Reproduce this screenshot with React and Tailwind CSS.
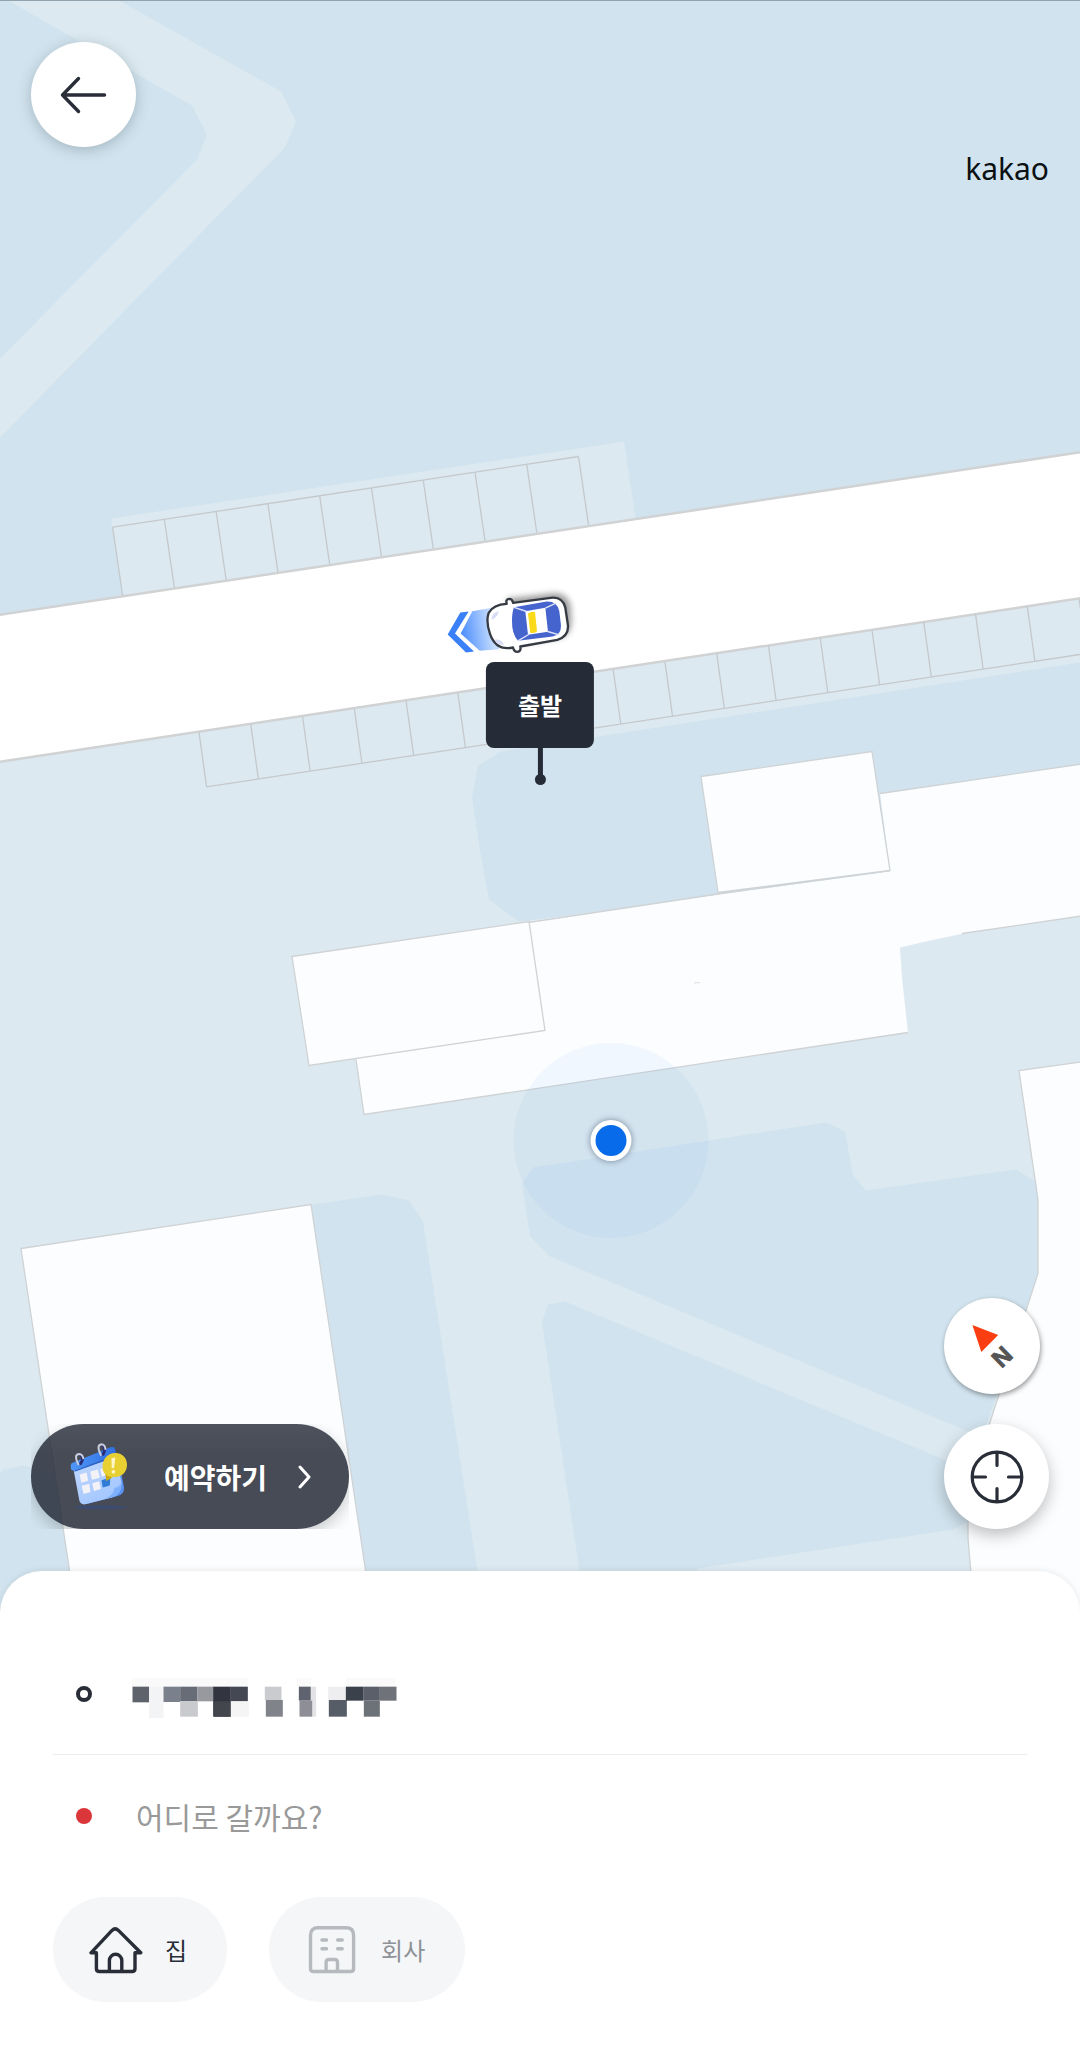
import React from "react";

const UPPER_BAYS = Array.from({ length: 10 }, (_, i) => i);
const LOWER_BAYS = Array.from({ length: 18 }, (_, i) => i);
const BAY_DX = 51.77;
const BAY_DY = -7.85;

function Car() {
  return (
    <g transform="translate(430 570) scale(0.33333)">
      <defs>
        <linearGradient id="beam" x1="80" y1="190" x2="185" y2="175" gradientUnits="userSpaceOnUse">
          <stop offset="0" stopColor="#3a82fb" />
          <stop offset="1" stopColor="#c3dbff" />
        </linearGradient>
        <filter id="carShadow" x="-20%" y="-30%" width="140%" height="160%">
          <feGaussianBlur stdDeviation="9" />
        </filter>
      </defs>
      <path d="M91 126 L116 123 L75 189 L132 243 L108 246 L53 192 Z" fill="#3a80f8" />
      <path d="M127 122 L185 112 L208 236 L149 241 L92 189 Z" fill="url(#beam)" />
      <path d="M230 85 L375 68 Q416 70 422 110 L424 150 Q424 190 395 200 L280 218 Z" fill="#000" opacity="0.4" filter="url(#carShadow)" />
      <path
        d="M230 100 Q226 86 238 85 Q247 85 249 97 L362 82 Q398 78 406 112 L414 165 Q416 197 382 208 L271 228 Q274 243 262 244 Q252 244 249 231 Q198 242 180 190 Q167 152 176 127 Q190 102 230 100 Z"
        fill="#fff"
        stroke="#363a42"
        strokeWidth="7"
        strokeLinejoin="round"
      />
      <path d="M184 148 Q186 125 206 122 Q204 140 184 148 Z M194 208 Q212 204 222 222 Q204 226 194 208 Z" fill="#d9dcf5" />
      <path d="M252 110 L350 93 Q382 92 388 122 L393 165 Q394 192 368 198 L264 211 Q245 190 246 150 Q246 125 252 110 Z" fill="#4664ce" />
      <path d="M286 122 L346 112 L354 184 L294 193 Z" fill="#fff" />
      <path d="M250 110 L290 123 M264 211 L296 192 M346 113 L378 98 M353 183 L388 193" stroke="#dfe4fb" strokeWidth="4" />
      <path d="M294 128 Q304 122 315 124 L321 182 Q312 190 301 187 Z" fill="#fbd91b" />
    </g>
  );
}

function MapCanvas() {
  return (
    <svg
      aria-hidden="true"
      className="absolute inset-0 h-full w-full"
      viewBox="0 0 1080 1613"
      preserveAspectRatio="xMidYMid slice"
    >
      <rect width="1080" height="1613" fill="#d1e3ee" />

      {/* footpath */}
      <path d="M8 0 L119 0 L281 91 L296 121 L285 147 L0 437 L0 358 L197 159 L207 134 L192 105 Z" fill="#dce9f0" />

      {/* ground south of the road */}
      <path d="M0 761 L1080 598 L1080 1613 L0 1613 Z" fill="#dce9f0" />
      <path d="M111 518 L624 441 L636 520 L123 597 Z" fill="#dce9f0" />

      {/* green areas */}
      <g fill="#d1e3ee">
        <path d="M501 751 L1080 662 L1080 800 L890 880 L519 921 L489 899 L480 850 L472 797 L478 765 Z" />
        <path d="M533 1167 L826 1122 L845 1131 L853 1175 L866 1190 L1016 1169 L1040 1184 L1040 1273 L982 1436 L966 1430 L550 1256 L530 1236 L522 1183 Z" />
        <path d="M542 1322 L548 1304 L565 1301 L944 1459 L976 1474 L970 1520 L953 1529 L697 1568 L690 1613 L586 1613 Z" />
        <path d="M300 1206 L381 1194 L409 1200 L423 1221 L484 1613 L360 1613 Z" />
        <path d="M0 1472 L4 1469 L24 1465 L60 1475 L80 1613 L0 1613 Z" />
      </g>

      {/* road */}
      <path d="M-5 615 L1085 451 L1085 597 L-5 762 Z" fill="#fff" stroke="#d0d2d3" strokeWidth="2.5" />

      {/* parking bays */}
      <g stroke="#c4c9cc" strokeWidth="1.3" fill="none">
        <path d="M112.6 526.7 L578.6 456" />
        {UPPER_BAYS.map((i) => (
          <line key={i} x1={112.6 + i * BAY_DX} y1={526.7 + i * BAY_DY} x2={122.6 + i * BAY_DX} y2={595 + i * BAY_DY} />
        ))}
        <path d="M206.6 786.3 L1080 654" />
        {LOWER_BAYS.map((i) => (
          <line key={i} x1={199 + i * BAY_DX} y1={731.7 + i * BAY_DY} x2={206.6 + i * BAY_DX} y2={786.3 + i * BAY_DY} />
        ))}
      </g>

      {/* buildings */}
      <path d="M356 1059 L364 1114 L908 1032 L902 977 L900 947 L926 941 L968 932 L1085 915 L1085 763 L880 793 L890 871 L718 894 L528 921 Z" fill="#fbfdff" />
      <g stroke="#cfd3d5" strokeWidth="1.3" fill="none">
        <path d="M962 933 L1085 915 M908 1032 L364 1114 L356 1059 M528 922 L718 893.5 L890 870 M1085 763 L880 793" />
        <path d="M701 776 L872 751 L890 870 L718 892 Z" fill="#fbfdff" />
        <path d="M292 956 L529 921 L545 1030 L309 1065 Z" fill="#fbfdff" />
        <path d="M1085 1061 L1019 1070 L1038 1199 L1038 1273 L989 1425 L968 1490 L968 1538 L975 1620 L1085 1620 Z" fill="#fbfdff" />
        <path d="M21 1248 L311 1204 L373 1620 L77 1620 Z" fill="#fbfdff" />
      </g>
      <path d="M694 982.5 L700 982" stroke="#dde1e3" strokeWidth="1" />

      {/* current position */}
      <defs>
        <filter id="dotShadow" x="-50%" y="-50%" width="200%" height="200%">
          <feGaussianBlur stdDeviation="3" />
        </filter>
      </defs>
      <circle cx="611" cy="1140" r="97.5" fill="#5a92f6" opacity="0.06" />
      <circle cx="611" cy="1140" r="21" fill="#4a5a70" opacity="0.6" filter="url(#dotShadow)" />
      <circle cx="611" cy="1140" r="20.5" fill="#fff" />
      <circle cx="611" cy="1140" r="15.5" fill="#086bea" />

      <Car />
    </svg>
  );
}

function CalendarIcon() {
  return (
    <svg aria-hidden="true" className="h-[67px] w-[58px] shrink-0" viewBox="150 105 175 200">
      <defs>
        <linearGradient id="calPage" x1="0" y1="0" x2="0.6" y2="1">
          <stop offset="0" stopColor="#c2d8ff" />
          <stop offset="1" stopColor="#a3c7ff" />
        </linearGradient>
        <linearGradient id="calTop" x1="0" y1="0" x2="1" y2="0">
          <stop offset="0" stopColor="#4e97f8" />
          <stop offset="1" stopColor="#2f6fe0" />
        </linearGradient>
      </defs>
      <ellipse cx="243" cy="298" rx="80" ry="6" fill="#2c4da0" opacity="0.35" />
      <path d="M300 170 L313 238 Q314 258 294 264 L200 288 L190 200 Z" fill="#5a92f2" />
      <path d="M161 186 L286 148 L305 220 Q308 258 276 268 L196 289 Q181 291 178 276 Z" fill="url(#calPage)" />
      <path d="M276 268 Q308 258 305 222 Q302 236 284 240 Q284 262 252 274 Z" fill="#7fb0fb" />
      <path d="M152 172 Q152 165 160 163 L272 117 Q284 113 286 122 L290 141 L163 187 Q155 188 153 182 Z" fill="url(#calTop)" />
      <path d="M163 187 L290 141 L291 145 L164 191 Z" fill="#2a64cf" />
      <path
        d="M179 199 L200 193 L205 218 L184 224 Z M211 190 L234 184 L240 209 L216 215 Z M241 182 L254 179 L256 203 L246 206 Z M185 233 L208 227 L212 252 L191 258 Z M217 225 L238 219 L243 243 L222 249 Z"
        fill="#f3f2f6"
      />
      <path d="M245 216 L272 208 L270 232 L249 238 Z" fill="#2f7bd6" />
      <g fill="none" strokeLinecap="round">
        <path d="M182 166 Q194 148 182 140" stroke="#2a2f78" strokeWidth="9" />
        <path d="M175 168 Q160 138 178 137 Q188 138 190 150" stroke="#c9ccdc" strokeWidth="6" />
        <path d="M250 138 Q260 120 248 110" stroke="#2a2f78" strokeWidth="9" />
        <path d="M243 140 Q228 110 245 108 Q255 109 257 122" stroke="#c9ccdc" strokeWidth="6" />
      </g>
      <path d="M287 134 C310 134 323 152 322 171 C321 196 302 208 281 206 L260 218 L257 198 C246 190 245 168 255 151 Q266 134 287 134 Z" fill="#e8d033" />
      <path d="M257 198 L260 218 L278 207 Q264 205 257 198 Z" fill="#c9a70e" />
      <path d="M275 150 L287 148 L283 179 L276 180 Z" fill="#fff6c8" />
      <circle cx="281" cy="191" r="5.5" fill="#fff6c8" />
    </svg>
  );
}

function MaskedAddress() {
  return (
    <svg role="img" aria-label="출발지 주소" className="h-12 w-[265px]" viewBox="306 91 794 144">
      <g fill="#fafafa">
        <rect x="306" y="115" width="348" height="26" />
        <rect x="800" y="115" width="42" height="26" />
        <rect x="948" y="115" width="148" height="26" />
      </g>
      <rect x="307" y="141" width="50" height="47" fill="#5d626b" />
      <rect x="357" y="141" width="43" height="94" fill="#f3f4f6" />
      <rect x="400" y="141" width="50" height="46" fill="#7a808c" />
      <rect x="450" y="141" width="52" height="44" fill="#686c76" />
      <rect x="450" y="185" width="53" height="46" fill="#c9cacd" />
      <rect x="502" y="141" width="48" height="44" fill="#97999e" />
      <rect x="549" y="141" width="53" height="90" fill="#32353f" />
      <rect x="552" y="185" width="50" height="46" fill="#43464d" />
      <rect x="602" y="141" width="51" height="44" fill="#434852" />
      <rect x="602" y="185" width="54" height="46" fill="#f5f5f6" />
      <rect x="704" y="141" width="50" height="40" fill="#c9cbce" />
      <rect x="707" y="181" width="51" height="50" fill="#80838a" />
      <rect x="806" y="141" width="36" height="42" fill="#5e636f" />
      <rect x="842" y="141" width="16" height="90" fill="#e3e3e6" />
      <rect x="808" y="183" width="38" height="48" fill="#8e8f96" />
      <rect x="894" y="141" width="53" height="40" fill="#eeeef0" />
      <rect x="896" y="181" width="54" height="50" fill="#575d67" />
      <rect x="947" y="141" width="52" height="42" fill="#3a414b" />
      <rect x="999" y="141" width="50" height="42" fill="#5a5f69" />
      <rect x="1049" y="141" width="50" height="42" fill="#6f7279" />
      <rect x="1001" y="183" width="48" height="48" fill="#6d7178" />
    </svg>
  );
}

function HomeIcon() {
  return (
    <svg aria-hidden="true" className="h-12 w-[54px]" viewBox="0 0 54 48" fill="none" stroke="#282d38" strokeWidth="3.4" strokeLinecap="round" strokeLinejoin="round">
      <path d="M7.4 26.8V42.5q0 3 3 3H43q3 0 3-3V26.8h5.8L29.4 4.4q-3.2-3-6.4 0L2 26.8Z" />
      <path d="M20.4 45V34.5a6.2 6.2 0 0 1 12.4 0V45" />
    </svg>
  );
}

function OfficeIcon() {
  return (
    <svg aria-hidden="true" className="h-12 w-[54px]" viewBox="-3.5 0 54 48" fill="none" stroke="#b6b9bd" strokeWidth="3.4" strokeLinecap="round" strokeLinejoin="round">
      <path d="M9.5 1.8h28q7.6 0 7.6 7.6V42.5q0 3-3 3H5q-3 0-3-3V9.4q0-7.6 7.5-7.6Z" />
      <path d="M13.5 14H18M29.2 14h4.5M13.5 22.7H18M29.2 22.7h4.5" />
      <path d="M17.600 45V36.500q0-3 3-3h5.400q3 0 3 3V45" />
    </svg>
  );
}

export default function App() {
  return (
    <div className="flex min-h-screen flex-col bg-white font-['Noto_Sans_CJK_KR',sans-serif] text-[#282d38]">
      <main className="relative flex min-h-[1000px] flex-1 flex-col justify-between border-t border-[#91a3af] px-[31px] pt-[41px] pb-[84px]">
        <MapCanvas />

        {/* pickup pin */}
        <div className="absolute top-[41%] left-1/2 flex -translate-x-1/2 flex-col items-center">
          <div className="rounded-lg bg-[#252b37] px-8 py-6 text-2xl leading-[38px] font-bold text-white">출발</div>
          <div className="h-[30px] w-[5px] bg-[#252b37]" />
          <div className="-mt-1 size-[11px] rounded-full bg-[#252b37]" />
        </div>

        <header className="relative flex items-start justify-between">
          <button type="button" aria-label="뒤로" className="flex size-[105px] items-center justify-center rounded-full bg-white shadow-[0_3px_14px_rgba(60,80,90,0.3)]">
            <svg aria-hidden="true" className="size-12" viewBox="0 0 48 48" fill="none" stroke="#282d38" strokeWidth="3.4" strokeLinecap="round" strokeLinejoin="round">
              <path d="M44.5 24H2.500M18.500 7.500L2.500 24l16 16.500" />
            </svg>
          </button>
          <span className="mt-[107px] font-['Noto_Sans',sans-serif] text-[30px] leading-10 text-[#0b1013]">kakao</span>
        </header>

        <div className="relative flex items-end justify-between">
          <div className="overflow-hidden">
            <button type="button" className="flex h-[105px] items-center rounded-full bg-[#262c38]/85 bg-linear-to-b from-white/4 to-transparent to-30% pr-9 pl-[39px] text-[28px] leading-10 font-bold text-white shadow-[0_6px_16px_rgba(0,0,0,0.2)]">
              <CalendarIcon />
              <span className="ml-9">예약하기</span>
              <svg aria-hidden="true" className="ml-[30px] h-6 w-4" viewBox="0 0 16 24" fill="none" stroke="#fff" strokeWidth="3" strokeLinecap="round" strokeLinejoin="round">
                <path d="M3 2L12 12L3 22" />
              </svg>
            </button>
          </div>

          <div className="flex flex-col items-start gap-[30px]">
            <button type="button" aria-label="나침반" className="size-24 rounded-full bg-white shadow-[1px_2px_5px_rgba(0,0,0,0.4)]">
              <svg className="size-24" viewBox="-48 -48 96 96">
                <path d="M-19.6 -21L6.2 -11L-10.7 6Z" fill="#fb3d12" />
                <text
                  x="10"
                  y="19"
                  textAnchor="middle"
                  transform="rotate(-44 10 10.7)"
                  className="fill-[#555555] stroke-[#555555] stroke-1 font-['Liberation_Sans',sans-serif] text-[24px] font-bold"
                >
                  N
                </text>
              </svg>
            </button>
            <button type="button" aria-label="현재 위치" className="flex size-[105px] items-center justify-center rounded-full bg-white shadow-[0_6px_16px_rgba(0,0,0,0.25)]">
              <svg aria-hidden="true" className="size-14" viewBox="0 0 56 56" fill="none" stroke="#282d38" strokeWidth="3.2" strokeLinecap="round">
                <circle cx="28" cy="28" r="24.8" />
                <path d="M28 4v12.500M28 52V39.500M4 28h12.500M52 28H39.500" />
              </svg>
            </button>
          </div>
        </div>
      </main>

      <section className="relative -mt-[42px] rounded-t-[42px] bg-white px-[53px] pt-[63px] pb-[58px] shadow-[0_-1px_6px_rgba(0,0,0,0.08)]">
        <button type="button" className="flex h-[120px] w-full items-center gap-10 pl-[23px]">
          <span className="size-4 rounded-full border-4 border-[#282d38]" />
          <MaskedAddress />
        </button>
        <hr className="border-[#ececec]" />
        <label className="flex h-[122px] items-center gap-10 pl-[23px]">
          <span className="size-4 shrink-0 rounded-full bg-[#db3639]" />
          <input
            type="text"
            aria-label="도착지"
            placeholder="어디로 갈까요?"
            className="w-full min-w-0 bg-transparent pl-1 text-[30px] leading-10 outline-none placeholder:text-[#999999]"
          />
        </label>
        <div className="mt-5 flex gap-[42px]">
          <button type="button" className="flex h-[105px] items-center gap-[22px] rounded-full bg-[#f4f6f8] pr-10 pl-9 text-2xl">
            <HomeIcon />집
          </button>
          <button type="button" className="flex h-[105px] items-center gap-[22px] rounded-full bg-[#f4f6f8] pr-10 pl-9 text-2xl text-[#8e9196]">
            <OfficeIcon />회사
          </button>
        </div>
      </section>
    </div>
  );
}
